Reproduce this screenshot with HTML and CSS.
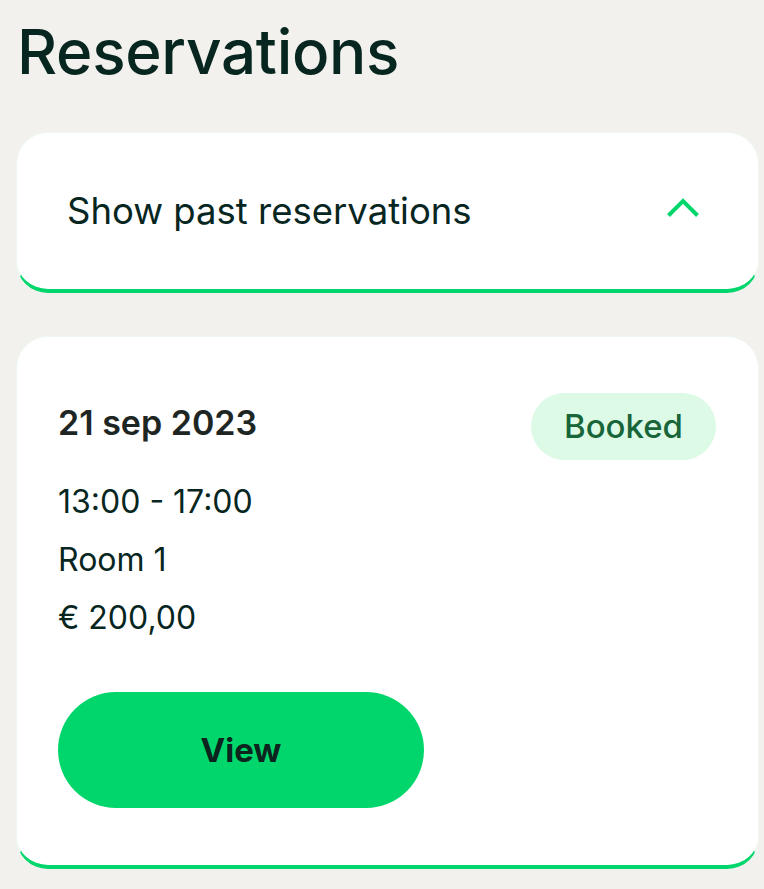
FILE: index.html
```html
<!DOCTYPE html>
<html lang="en">
<head>
<meta charset="utf-8">
<title>Reservations</title>
<link rel="stylesheet" href="styles.css">
</head>
<body>
<main class="page">
  <h1 class="title">Reservations</h1>
  <section class="card toggle-card">
    <span class="toggle-label">Show past reservations</span>
    <svg class="chevron" width="34" height="20" viewBox="0 0 34 20" aria-hidden="true">
      <path d="M2.5 17.5 L17 3 L31.5 17.5" fill="none" stroke="#00d66b" stroke-width="4"/>
    </svg>
  </section>
  <section class="card reservation">
    <div class="res-head">
      <div class="res-date">21 sep 2023</div>
      <span class="badge">Booked</span>
    </div>
    <div class="res-line res-time">13:00 - 17:00</div>
    <div class="res-line">Room 1</div>
    <div class="res-line">€ 200,00</div>
    <button class="btn-view">View</button>
  </section>
</main>
</body>
</html>
```
FILE: styles.css
```css
html, body {
  margin: 0;
  padding: 0;
  background: #f2f1ee;
}
body {
  font-family: Inter, "Noto Sans", sans-serif;
  color: #07261f;
}
.page {
  padding: 0 5px 0 16px;
  display: flex;
  flex-direction: column;
}
.title {
  margin: 14px 0 0 1px;
  font-size: 62px;
  font-weight: 500;
  line-height: 76px;
  letter-spacing: -0.3px;
  color: #07261f;
}
.card {
  background: #fff;
  border: 1px solid #eef8f1;
  border-bottom: 4px solid #00d66b;
  border-radius: 32px;
  box-sizing: border-box;
}
.toggle-card {
  margin-top: 42px;
  height: 161px;
  display: flex;
  align-items: center;
  justify-content: space-between;
  padding: 0 58px 0 50px;
}
.toggle-label {
  font-size: 36.5px;
  font-weight: 400;
  color: #07261f;
}
.chevron {
  display: block;
  margin-top: -6px;
}
.reservation {
  margin-top: 43px;
  padding: 56px 41px 57px 41px;
  display: flex;
  flex-direction: column;
  align-items: flex-start;
}
.res-head {
  align-self: stretch;
  display: flex;
  justify-content: space-between;
  align-items: flex-start;
}
.res-date {
  margin-top: 10px;
  font-size: 34px;
  line-height: 40px;
  font-weight: 600;
  letter-spacing: 0;
  color: #1e2624;
}
.badge {
  margin-right: 1px;
  background: #dcfae6;
  color: #18653a;
  font-size: 33px;
  font-weight: 500;
  height: 67px;
  line-height: 67px;
  padding: 0 33px;
  border-radius: 34px;
}
.res-line {
  font-size: 32px;
  line-height: 58px;
  color: #07261f;
}
.res-time {
  margin-top: 13px;
}
.btn-view {
  margin-top: 45px;
  width: 366px;
  height: 116px;
  border: none;
  border-radius: 58px;
  background: #00d66b;
  color: #0d241e;
  font-family: Inter, "Noto Sans", sans-serif;
  font-size: 33px;
  font-weight: 700;
}
```
